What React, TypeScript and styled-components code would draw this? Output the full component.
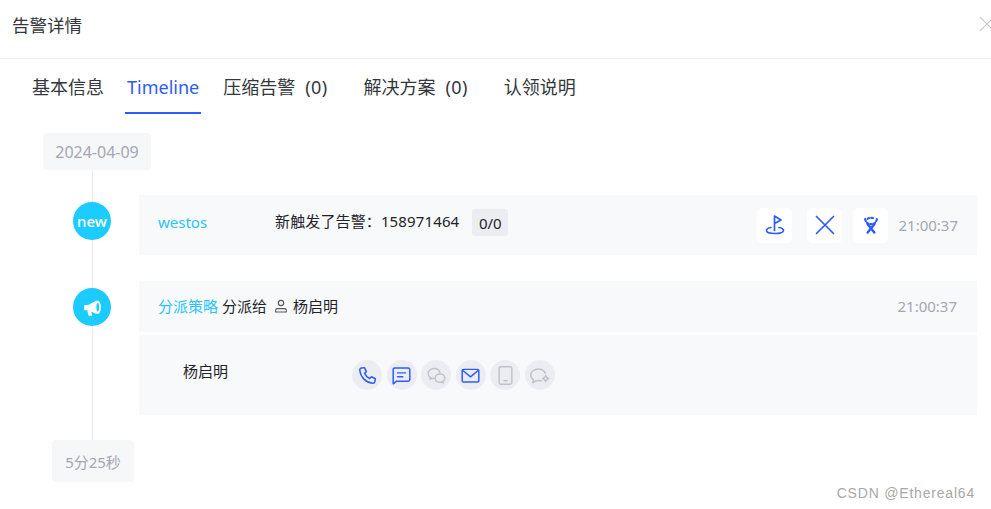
import { ReactNode } from "react";
import styled, { createGlobalStyle } from "styled-components";

const GlobalStyle = createGlobalStyle`
  html, body {
    margin: 0;
    padding: 0;
    background: #fff;
  }
  body {
    font-family: "Noto Sans", "Noto Sans CJK SC", sans-serif;
    color: #1f2329;
  }
  * {
    box-sizing: border-box;
  }
`;

const Page = styled.div`
  position: relative;
  width: 991px;
  height: 509px;
  overflow: hidden;
  background: #fff;
`;

const Header = styled.header`
  height: 59px;
  padding: 0 0 10px 12px;
  display: flex;
  align-items: center;
  justify-content: space-between;
  border-bottom: 1px solid #f1f2f4;
`;

const Title = styled.h1`
  margin: 0;
  font-size: 17.5px;
  font-weight: 400;
  color: #33363b;
`;

const Close = styled.button`
  width: 16px;
  height: 16px;
  margin-right: -4px;
  padding: 0;
  border: 0;
  background: none;
  color: #c4c7cc;
`;

const Tabs = styled.nav`
  height: 55px;
  padding-left: 32px;
  display: flex;
`;

const Tab = styled.div<{ $active?: boolean; $gap: number }>`
  position: relative;
  margin-right: ${(p) => p.$gap}px;
  padding-top: 16px;
  font-size: 18px;
  line-height: 24px;
  white-space: nowrap;
  color: ${(p) => (p.$active ? "#2b5cff" : "#33363b")};
  ${(p) =>
    p.$active &&
    `
    &::after {
      content: "";
      position: absolute;
      left: -2px;
      right: -2px;
      top: 53px;
      height: 2px;
      background: #2b5cff;
    }
  `}
`;

const TabCount = styled.span`
  margin-left: 10px;
  letter-spacing: 0.4px;
`;

const Body = styled.main`
  padding: 19px 14px 0 0;
`;

const Chip = styled.div<{ $left: number; $width: number; $height: number }>`
  width: ${(p) => p.$width}px;
  height: ${(p) => p.$height}px;
  margin-left: ${(p) => p.$left}px;
  display: flex;
  align-items: center;
  justify-content: center;
  border-radius: 4px;
  background: #f6f7f9;
  font-size: 15px;
  color: #a3a6b4;
`;

const DateChip = styled(Chip)`
  font-size: 16px;
`;

const Row = styled.section<{ $height: number }>`
  height: ${(p) => p.$height}px;
  padding-left: 73px;
  display: flex;
  gap: 28px;
`;

const Rail = styled.div`
  width: 38px;
  flex-shrink: 0;
  display: flex;
  flex-direction: column;
  align-items: center;
`;

const Connector = styled.div<{ $height?: number }>`
  width: 1px;
  margin-left: 1px;
  background: #e9ebf0;
  ${(p) => (p.$height ? `height: ${p.$height}px;` : "flex: 1;")}
`;

const Dot = styled.div`
  width: 38px;
  height: 38px;
  flex-shrink: 0;
  display: flex;
  align-items: center;
  justify-content: center;
  border-radius: 50%;
  background: #1ccbff;
  color: #fff;
  font-size: 15px;
  font-weight: 500;
`;

const Content = styled.div<{ $top?: number }>`
  flex: 1;
  padding-top: ${(p) => p.$top ?? 0}px;
  display: flex;
  flex-direction: column;
  gap: 3px;
`;

const Card = styled.div<{ $height: number }>`
  height: ${(p) => p.$height}px;
  display: flex;
  align-items: center;
  background: #f8f9fb;
  font-size: 15px;
`;

const EventCard = styled(Card)`
  padding: 0 19px;
`;

const PolicyCard = styled(Card)`
  padding: 0 20px 2px 19px;
`;

const NameLink = styled.span`
  width: 117px;
  margin-top: -7px;
  color: #28c4ff;
`;

const Message = styled.span`
  margin-top: -10px;
  letter-spacing: 0.13px;
  white-space: nowrap;
  color: #1f2329;
`;

const Count = styled.span`
  width: 36px;
  height: 27px;
  margin: -5px 0 0 13px;
  display: flex;
  align-items: center;
  justify-content: center;
  border-radius: 3px;
  background: #ebedf1;
`;

const Actions = styled.div`
  margin-left: auto;
  display: flex;
  align-items: center;
`;

const ActionButton = styled.button<{ $gap: number }>`
  width: 35px;
  height: 35px;
  margin-right: ${(p) => p.$gap}px;
  padding: 0;
  display: flex;
  align-items: center;
  justify-content: center;
  border: 0;
  border-radius: 5px;
  background: #fff;
  color: #2b5cff;
`;

const Time = styled.span`
  margin-left: auto;
  color: #a3a6b4;
`;

const PolicyLink = styled.span`
  color: #28c4ff;
`;

const Plain = styled.span`
  margin-left: 4px;
  color: #1f2329;
`;

const Person = styled.span`
  margin-left: 6px;
  display: flex;
  align-items: center;
  gap: 4px;
  color: #1f2329;
`;

const PersonIcon = styled.span`
  display: flex;
  color: #55585e;
`;

const ContactCard = styled(Card)`
  padding-left: 44px;
`;

const ContactName = styled.span`
  width: 169px;
  margin-top: -10px;
`;

const Channels = styled.div`
  display: flex;
  gap: 4.6px;
`;

const Channel = styled.span<{ $on?: boolean }>`
  width: 30px;
  height: 30px;
  display: flex;
  align-items: center;
  justify-content: center;
  border-radius: 50%;
  background: #ecedf2;
  color: ${(p) => (p.$on ? "#2b5cff" : "#c0c2c9")};
`;

const Watermark = styled.div`
  position: absolute;
  right: 16px;
  bottom: 8px;
  font-family: "Liberation Sans", sans-serif;
  font-size: 14px;
  letter-spacing: 0.8px;
  color: #a8a8a8;
`;

function Icon({ size, children }: { size: number; children: ReactNode }) {
  return (
    <svg
      width={size}
      height={size}
      viewBox="0 0 24 24"
      fill="none"
      stroke="currentColor"
      strokeWidth="1.7"
      strokeLinecap="round"
      strokeLinejoin="round"
    >
      {children}
    </svg>
  );
}

function BullhornIcon() {
  return (
    <svg width={21} height={21} viewBox="0 0 24 24" fill="#fff">
      <path d="M2.500 9h4.500l9.500-5v15.500L7 15H2.500Z" />
      <path d="M6 15h4.200l1.500 6.500H7.500Z" />
      <ellipse cx="18" cy="11.750" rx="3.500" ry="7.750" />
      <ellipse cx="18" cy="11.750" rx="1.500" ry="5" fill="#1ccbff" />
    </svg>
  );
}

const channels = [
  {
    id: "phone",
    on: true,
    icon: <path d="M5 3.500 8.500 3l2.200 4.600-2 2c1 2.400 3.300 4.700 5.800 5.800l2-2 4.500 2.300-.5 3.300c-.3 1.300-1.500 2-2.800 1.900C10 20 4.200 14 3.200 6.300 3 5 3.700 3.900 5 3.500Z" />,
  },
  {
    id: "sms",
    on: true,
    icon: (
      <>
        <path d="M2.500 5.500c0-1.100.9-2 2-2h15c1.100 0 2 .9 2 2v11c0 1.100-.9 2-2 2H6.500l-4 3V5.500Z" />
        <path d="M7.500 9h9M7.500 13.500h6" />
      </>
    ),
  },
  {
    id: "wechat",
    on: false,
    icon: (
      <>
        <path d="M16 9c-.6-3-3.400-5-6.800-5C5.500 4 2.500 6.500 2.500 9.700c0 1.900 1 3.500 2.600 4.600l-.6 2 2.300-1.200c.8.200 1.600.3 2.400.3" />
        <path d="M21.500 15c0-2.700-2.500-4.800-5.500-4.800s-5.500 2.100-5.500 4.800 2.500 4.800 5.500 4.800c.7 0 1.300-.1 1.900-.3l1.900 1-.5-1.700c1.300-.9 2.200-2.300 2.200-3.800Z" />
      </>
    ),
  },
  {
    id: "mail",
    on: true,
    icon: (
      <>
        <rect x="2.500" y="5" width="19" height="14.500" rx="1.500" />
        <path d="m3 6 9 7.500L21 6" />
      </>
    ),
  },
  {
    id: "mobile",
    on: false,
    icon: (
      <>
        <rect x="4.750" y="2" width="14.500" height="20" rx="2" />
        <path d="M10 18h4" />
      </>
    ),
  },
  {
    id: "bot",
    on: false,
    icon: (
      <>
        <path d="M14 18H8l-3.500 2.500.5-3.500c-1.800-1.400-3-3.200-3-5.300C2 7.500 6 4.500 10.500 4.500c3.700 0 7 2 8 5" />
        <path d="m19 12 1.200 2.300 2.300 1.200-2.300 1.200L19 19l-1.200-2.300-2.300-1.200 2.300-1.200L19 12Z" />
      </>
    ),
  },
];

export default function App() {
  return (
    <Page>
      <GlobalStyle />
      <Header>
        <Title>告警详情</Title>
        <Close aria-label="close">
          <Icon size={16}>
            <path d="M2 2l20 20M22 2 2 22" />
          </Icon>
        </Close>
      </Header>
      <Tabs>
        <Tab $gap={23}>基本信息</Tab>
        <Tab $active $gap={24}>Timeline</Tab>
        <Tab $gap={36}>压缩告警<TabCount>(0)</TabCount></Tab>
        <Tab $gap={36}>解决方案<TabCount>(0)</TabCount></Tab>
        <Tab $gap={0}>认领说明</Tab>
      </Tabs>
      <Body>
        <DateChip $left={43} $width={108} $height={37}>2024-04-09</DateChip>
        <Row $height={111}>
          <Rail>
            <Connector $height={32} />
            <Dot>new</Dot>
            <Connector />
          </Rail>
          <Content $top={25}>
            <EventCard $height={60}>
              <NameLink>westos</NameLink>
              <Message>新触发了告警：158971464</Message>
              <Count>0/0</Count>
              <Actions>
                <ActionButton $gap={15}>
                  <Icon size={24}>
                    <path d="M11.500 17.500V3l6.500 4-6.500 3.500" />
                    <path d="M8 14.500C5 15 3.500 16 3.500 17.500c0 1.800 3.600 3 8.500 3s8.500-1.200 8.500-3c0-1.500-1.500-2.500-4.500-3" />
                  </Icon>
                </ActionButton>
                <ActionButton $gap={11}>
                  <Icon size={24}>
                    <path d="M3.500 3.500l17 17M20.500 3.500l-17 17" />
                  </Icon>
                </ActionButton>
                <ActionButton $gap={10}>
                  <Icon size={20}>
                    <path d="M8 21l8-10M16 21 8 11" strokeWidth="3" />
                    <path d="M5 5c.5 4 3.500 6 7 6s6.500-2 7-6M8 4.500c1-1.500 7-1.500 8 0" strokeWidth="2.600" strokeDasharray="2 2.500" />
                  </Icon>
                </ActionButton>
                <Time>21:00:37</Time>
              </Actions>
            </EventCard>
          </Content>
        </Row>
        <Row $height={159}>
          <Rail>
            <Connector $height={7} />
            <Dot>
              <BullhornIcon />
            </Dot>
            <Connector />
          </Rail>
          <Content>
            <PolicyCard $height={51}>
              <PolicyLink>分派策略</PolicyLink>
              <Plain>分派给</Plain>
              <Person>
                <PersonIcon>
                  <Icon size={16}>
                    <circle cx="12" cy="7.500" r="4" />
                    <path d="M4 21v-2.500c0-1.400 1.100-2.500 2.500-2.500h11c1.400 0 2.500 1.100 2.500 2.500V21Z" />
                  </Icon>
                </PersonIcon>
                杨启明
              </Person>
              <Time>21:00:37</Time>
            </PolicyCard>
            <ContactCard $height={80}>
              <ContactName>杨启明</ContactName>
              <Channels>
                {channels.map((c) => (
                  <Channel key={c.id} $on={c.on}>
                    <Icon size={21}>{c.icon}</Icon>
                  </Channel>
                ))}
              </Channels>
            </ContactCard>
          </Content>
        </Row>
        <Chip $left={52} $width={82} $height={42}>5分25秒</Chip>
      </Body>
      <Watermark>CSDN @Ethereal64</Watermark>
    </Page>
  );
}
